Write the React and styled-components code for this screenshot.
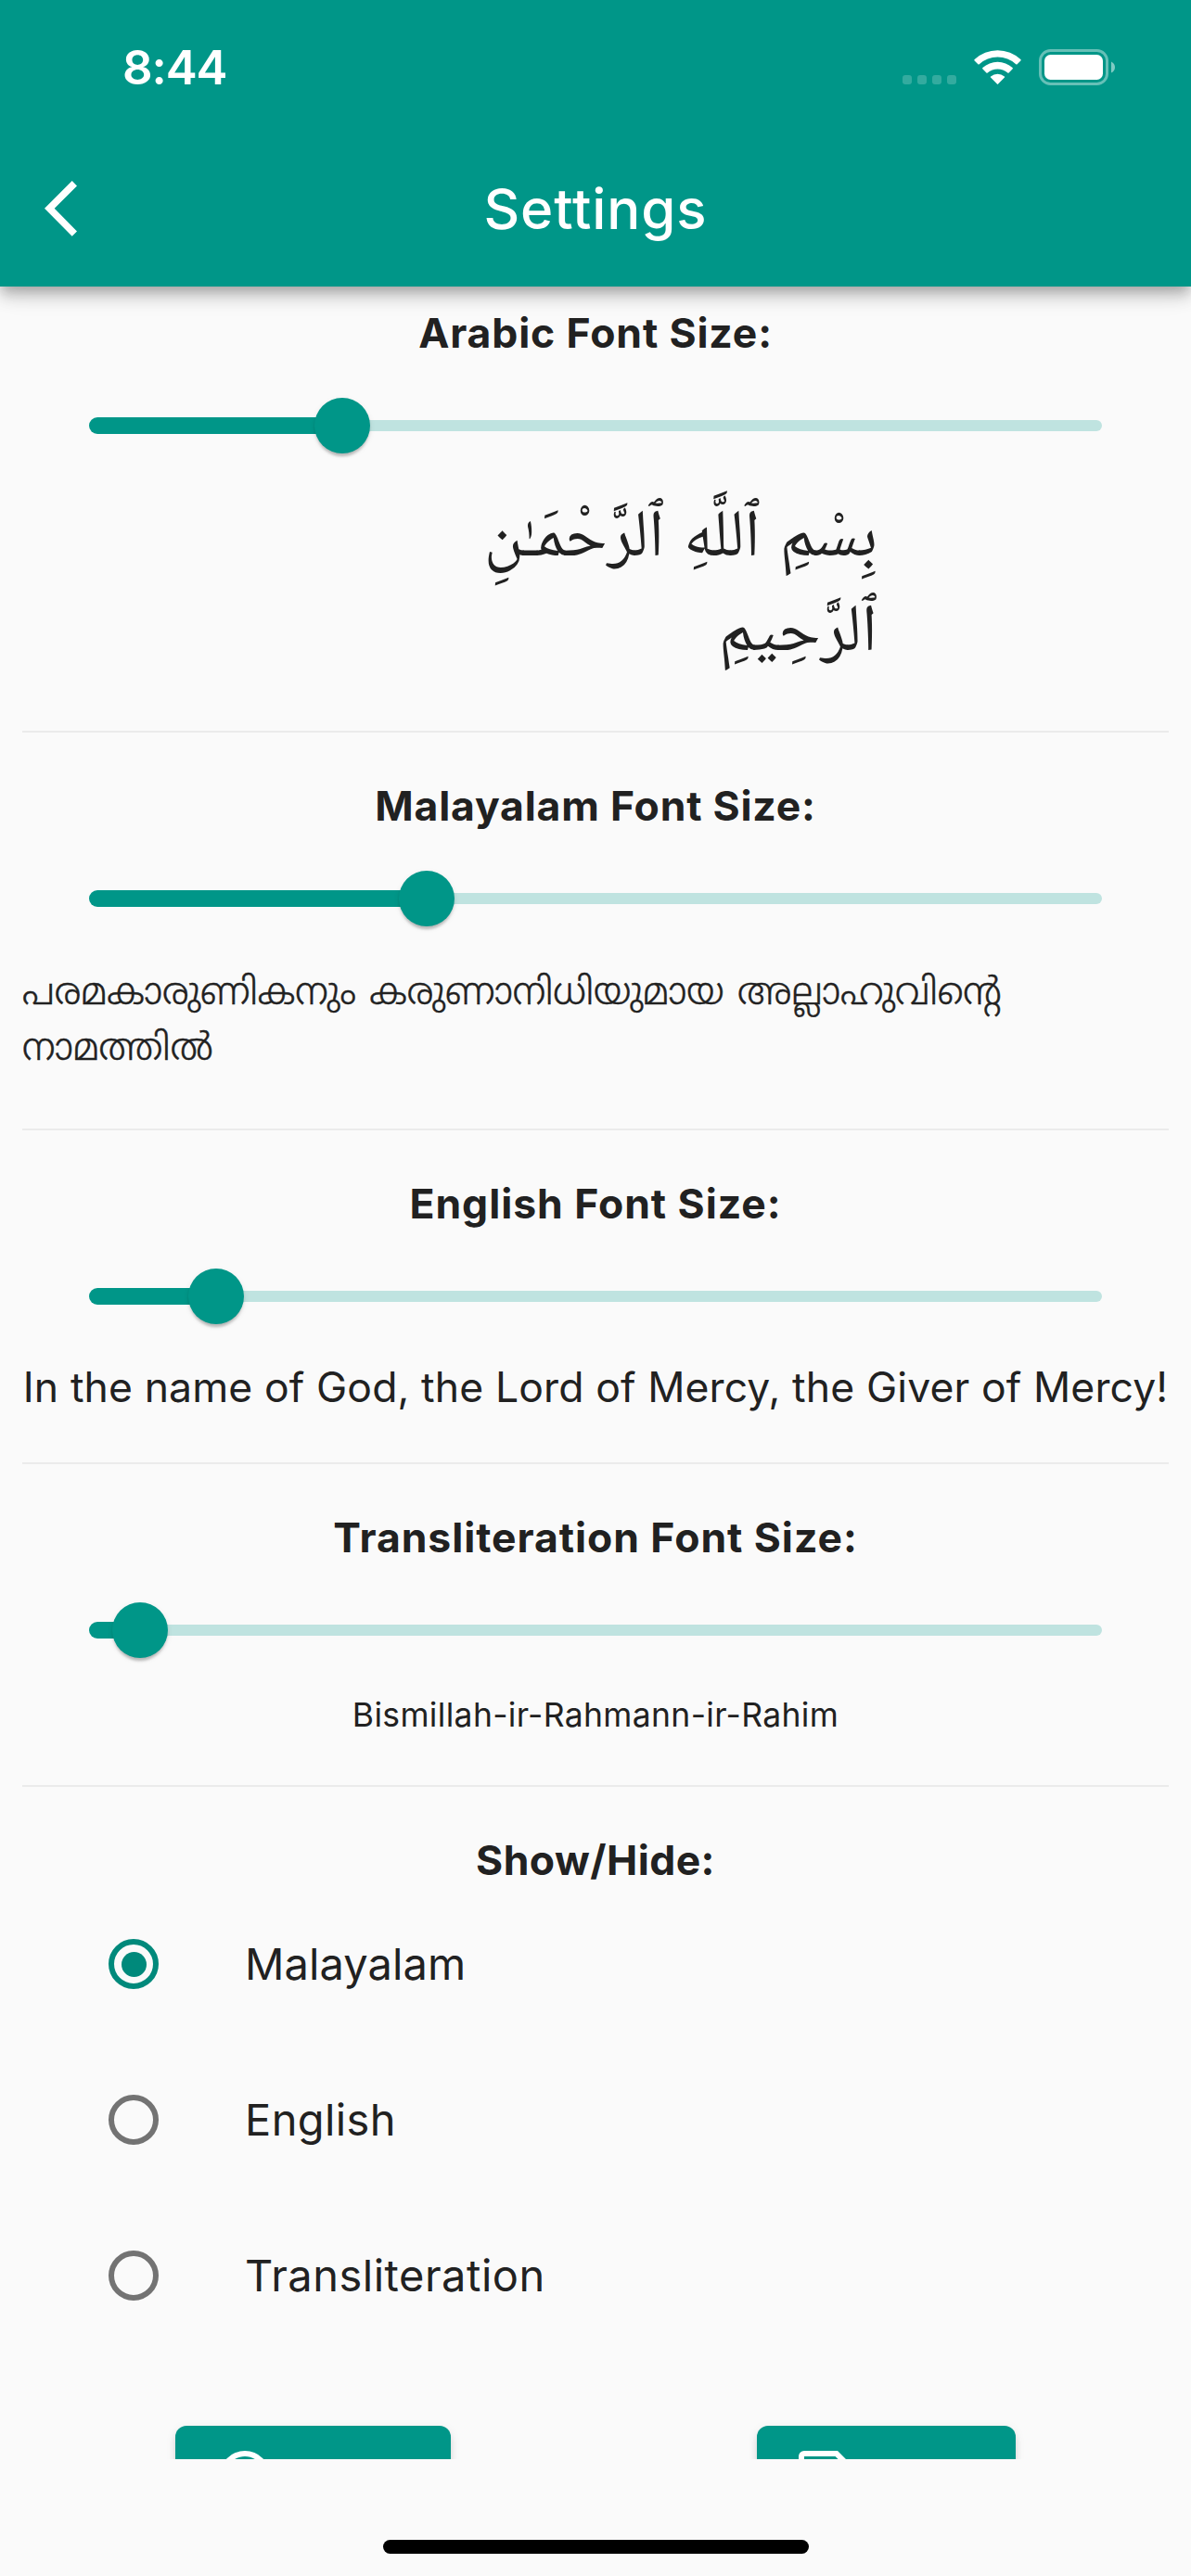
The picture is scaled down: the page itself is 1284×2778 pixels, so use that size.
import React from "react";
import styled, { createGlobalStyle } from "styled-components";
import { MdHistory, MdOutlineSave } from "react-icons/md";

const teal = "#009688";
const ink = "#212121";

const GlobalStyle = createGlobalStyle`
  * { box-sizing: border-box; }
  body { margin: 0; background: #fafafa; }
`;

const Screen = styled.div`
  width: 1284px;
  height: 2778px;
  display: flex;
  flex-direction: column;
  overflow: hidden;
  background: #fafafa;
  color: ${ink};
  font-family: Inter, "Noto Sans", sans-serif;
`;

const Header = styled.header`
  flex: none;
  height: 309px;
  position: relative;
  z-index: 1;
  background: ${teal};
  color: #fff;
  box-shadow: 0 6px 12px -3px rgba(0, 0, 0, 0.2), 0 12px 15px rgba(0, 0, 0, 0.14),
    0 3px 30px rgba(0, 0, 0, 0.12);
`;

const StatusBar = styled.div`
  height: 141px;
  padding: 0 82px 0 132px;
  display: flex;
  align-items: flex-start;
  justify-content: space-between;
`;

const Clock = styled.span`
  margin-top: 42px;
  font-size: 51px;
  line-height: 62px;
  font-weight: 600;
  letter-spacing: -1.1px;
`;

const StatusIcons = styled.div`
  margin-top: 53px;
  display: flex;
  gap: 19px;
`;

const NavBar = styled.div`
  height: 168px;
  display: grid;
  grid-template-columns: 168px 1fr 168px;
  align-items: center;
`;

const BackButton = styled.button`
  margin-left: 48px;
  padding: 0;
  border: 0;
  display: flex;
  background: none;
`;

const Title = styled.h1`
  margin: 0;
  text-align: center;
  font-size: 60px;
  line-height: 72px;
  font-weight: 500;
  letter-spacing: 0.9px;
`;

const Content = styled.main`
  height: 2343px;
  padding: 23px 24px 0;
  overflow: hidden;
`;

const Section = styled.section`
  border-bottom: ${(p) => (p.$last ? "0" : "2px solid #ebebeb")};
  margin-bottom: ${(p) => (p.$last ? "0" : "52px")};
`;

const Heading = styled.h2`
  margin: 0;
  text-align: center;
  font-size: 44.5px;
  line-height: 54px;
  font-weight: 700;
  letter-spacing: ${(p) => p.$spacing || "0"};
`;

const Slider = styled.div`
  height: 144px;
  margin: 0 72px;
  padding-top: 2px;
  display: flex;
  align-items: center;
`;

const Active = styled.div`
  flex: none;
  height: 18px;
  border-radius: 9px 0 0 9px;
  background: ${teal};
`;

const Thumb = styled.div`
  flex: none;
  width: 60px;
  height: 60px;
  margin: 0 -30px;
  position: relative;
  border-radius: 50%;
  background: ${teal};
  box-shadow: 0 6px 3px -3px rgba(0, 0, 0, 0.14), 0 3px 3px rgba(0, 0, 0, 0.1),
    0 2px 6px rgba(0, 0, 0, 0.08);
`;

const Inactive = styled.div`
  flex: 1;
  height: 12px;
  border-radius: 0 6px 6px 0;
  background: #bfe3e0;
`;

const ArabicSample = styled.p`
  margin: 0;
  width: 922px;
  height: 258px;
  padding: 3px 0 0 460px;
  direction: rtl;
  font-family: "Noto Naskh Arabic", "DejaVu Sans", sans-serif;
  font-size: 72px;
  line-height: 102px;
  word-spacing: 5px;
`;

const MalayalamSample = styled.p`
  margin: 0;
  height: 177px;
  padding-top: 3px;
  font-family: "Noto Sans Malayalam", "Noto Sans", sans-serif;
  font-size: 40.3px;
  font-weight: 300;
  line-height: 60px;
  word-spacing: 2px;
  -webkit-text-stroke: 0.5px ${ink};
`;

const LatinSample = styled.p`
  margin: 0;
  padding-bottom: 54px;
  text-align: center;
  white-space: nowrap;
  font-size: ${(p) => p.$size};
  line-height: ${(p) => p.$line};
  letter-spacing: ${(p) => p.$spacing};
`;

const Options = styled.div`
  padding-top: 1px;
`;

const Option = styled.label`
  height: 168px;
  padding-left: 93px;
  display: flex;
  align-items: center;
  gap: 93px;
  font-size: 47px;
  line-height: 58px;
  letter-spacing: ${(p) => p.$spacing};
`;

const Radio = styled.span`
  width: 54px;
  height: 54px;
  display: flex;
  align-items: center;
  justify-content: center;
  border: 6px solid ${(p) => (p.$on ? "#00897b" : "#737373")};
  border-radius: 50%;
  &::after {
    content: "";
    width: 27px;
    height: 27px;
    border-radius: 50%;
    background: ${(p) => (p.$on ? "#00897b" : "transparent")};
  }
`;

const Actions = styled.div`
  margin-top: 78px;
  display: flex;
  justify-content: space-around;
`;

const ActionButton = styled.button`
  width: ${(p) => p.$width};
  height: 108px;
  padding: 0 36px;
  display: flex;
  align-items: center;
  border: 0;
  border-radius: 12px;
  background: ${teal};
  color: #fff;
  font-size: 72px;
  box-shadow: 0 9px 3px -6px rgba(0, 0, 0, 0.16), 0 6px 6px rgba(0, 0, 0, 0.1),
    0 3px 12px rgba(0, 0, 0, 0.08);
`;

const HomeArea = styled.footer`
  flex: 1;
  padding-top: 87px;
  display: flex;
  justify-content: center;
`;

const HomeIndicator = styled.div`
  width: 459px;
  height: 15px;
  border-radius: 8px;
  background: #000;
`;

function SignalIcon() {
  return (
    <svg width="58" height="39" viewBox="0 0 58 39" fill="#fff" fillOpacity="0.2">
      {[0, 16, 32, 48].map((x) => (
        <rect key={x} x={x} y="28" width="10" height="10" rx="3" />
      ))}
    </svg>
  );
}

function WifiIcon() {
  return (
    <svg width="51" height="39" viewBox="0 -1 51 39" fill="#fff">
      <path d="M.6 11.4Q0 10.8.7 10.1A36 36 0 0 1 50.3 10.1Q51 10.8 50.4 11.4L46.6 15.2Q46 15.8 45.3 15.2A29.5 29.5 0 0 0 5.7 15.2Q5 15.8 4.4 15.2Z" />
      <path d="M9.3 20.3Q8.7 19.7 9.4 19A24 24 0 0 1 41.6 19Q42.3 19.7 41.7 20.3L37.6 24.4Q37 25 36.3 24.4A17 17 0 0 0 14.7 24.4Q14 25 13.4 24.4Z" />
      <path d="M18 29.6Q17.4 29 18.1 28.4A12 12 0 0 1 32.9 28.4Q33.6 29 33 29.6L26.1 36.6Q25.5 37.2 24.9 36.6Z" />
    </svg>
  );
}

function BatteryIcon() {
  return (
    <svg width="82" height="39" viewBox="0 0 82 39">
      <rect x="1.5" y="1.5" width="72" height="36" rx="11" fill="none" stroke="#fff" strokeWidth="3" strokeOpacity="0.4" />
      <rect x="6" y="6" width="63" height="27" rx="6.5" fill="#fff" />
      <path d="M78 13.4Q82 15.4 82 19.4Q82 23.4 78 25.6Z" fill="#fff" fillOpacity="0.5" />
    </svg>
  );
}

function ChevronIcon() {
  return (
    <svg width="36" height="60" viewBox="0 0 36 60" fill="#fff">
      <path d="M29.7 0L35 5.4L10.7 29.8L35 54.4L29.7 59.8L0 29.8Z" />
    </svg>
  );
}

function FontSize({ title, spacing, value, children }) {
  return (
    <Section>
      <Heading $spacing={spacing}>{title}</Heading>
      <Slider>
        <Active style={{ width: `${value * 100}%` }} />
        <Thumb />
        <Inactive />
      </Slider>
      {children}
    </Section>
  );
}

const options = [
  { label: "Malayalam", on: true, spacing: "0.1px" },
  { label: "English", on: false, spacing: "0.4px" },
  { label: "Transliteration", on: false, spacing: "0.5px" },
];

export default function App() {
  return (
    <Screen>
      <GlobalStyle />
      <Header>
        <StatusBar>
          <Clock>8:44</Clock>
          <StatusIcons>
            <SignalIcon />
            <WifiIcon />
            <BatteryIcon />
          </StatusIcons>
        </StatusBar>
        <NavBar>
          <BackButton aria-label="Back">
            <ChevronIcon />
          </BackButton>
          <Title>Settings</Title>
        </NavBar>
      </Header>
      <Content>
        <FontSize title="Arabic Font Size:" spacing="0.85px" value={0.25}>
          <ArabicSample lang="ar">بِسْمِ ٱللَّهِ ٱلرَّحْمَـٰنِ ٱلرَّحِيمِ</ArabicSample>
        </FontSize>
        <FontSize title="Malayalam Font Size:" spacing="0.8px" value={1 / 3}>
          <MalayalamSample lang="ml">
            പരമകാരുണികനും കരുണാനിധിയുമായ അല്ലാഹുവിന്റെ നാമത്തിൽ
          </MalayalamSample>
        </FontSize>
        <FontSize title="English Font Size:" spacing="0.95px" value={0.125}>
          <LatinSample $size="44.5px" $line="54px" $spacing="0.12px">
            In the name of God, the Lord of Mercy, the Giver of Mercy!
          </LatinSample>
        </FontSize>
        <FontSize title="Transliteration Font Size:" spacing="0.95px" value={0.05}>
          <LatinSample $size="35.5px" $line="42px" $spacing="0.33px">
            Bismillah-ir-Rahmann-ir-Rahim
          </LatinSample>
        </FontSize>
        <Section $last>
          <Heading $spacing="0.45px">Show/Hide:</Heading>
          <Options>
            {options.map((o) => (
              <Option key={o.label} $spacing={o.spacing}>
                <Radio $on={o.on} />
                {o.label}
              </Option>
            ))}
          </Options>
          <Actions>
            <ActionButton $width="297px" aria-label="Reset">
              <MdHistory />
            </ActionButton>
            <ActionButton $width="279px" aria-label="Save">
              <MdOutlineSave />
            </ActionButton>
          </Actions>
        </Section>
      </Content>
      <HomeArea>
        <HomeIndicator />
      </HomeArea>
    </Screen>
  );
}
